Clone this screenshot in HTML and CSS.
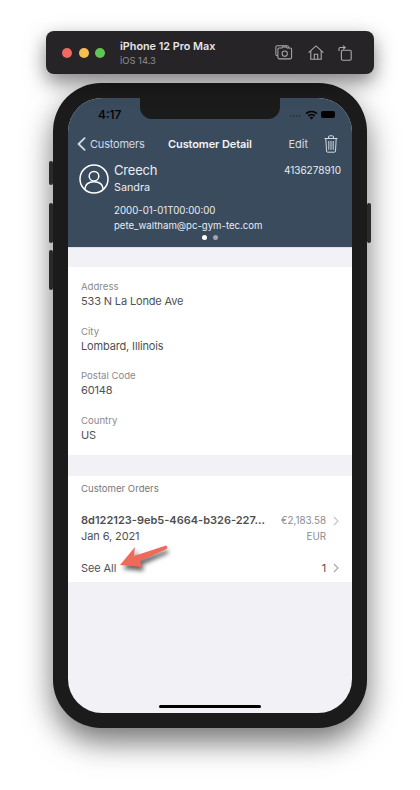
FILE: index.html
```html
<!DOCTYPE html>
<html lang="en">

<head>
  <meta charset="UTF-8">
  <meta name="viewport" content="width=device-width, initial-scale=1.0">
  <title>Customer Detail</title>
  <link rel="stylesheet" href="styles.css">
</head>

<body>

  <!-- Simulator title bar -->
  <div class="sim-bar">
    <div class="lights">
      <span class="light red"></span>
      <span class="light yellow"></span>
      <span class="light green"></span>
    </div>
    <div class="sim-title">
      <div class="sim-name">iPhone 12 Pro Max</div>
      <div class="sim-os">iOS 14.3</div>
    </div>
    <div class="sim-tools">
      <svg width="18" height="15" viewBox="0 0 19 16" fill="none" stroke="#a9a8aa" stroke-width="1.1">
        <path d="M3 11.5H2.2A1.4 1.4 0 0 1 .8 10.100V2.200A1.400 1.400 0 0 1 2.200.8h10.600a1.400 1.400 0 0 1 1.400 1.400V3"/>
        <path d="M4.400 3.500h2.900l1-1.300h3.400l1 1.300h3.500a1.400 1.400 0 0 1 1.400 1.400v8.700a1.400 1.400 0 0 1-1.400 1.400H4.400A1.400 1.400 0 0 1 3 13.600V4.900a1.400 1.400 0 0 1 1.400-1.400z" transform="translate(0 -.2)"/>
        <circle cx="10.300" cy="9.200" r="2.800"/>
      </svg>
      <svg width="16" height="15" viewBox="0 0 16 15" fill="none" stroke="#a9a8aa" stroke-width="1.1">
        <path d="M.6 7.600 8 .9l7.400 6.700"/>
        <path d="M2.800 6v8.300h10.400V6"/>
        <path d="M6.300 14.300V9.300h3.400v5"/>
      </svg>
      <svg width="14" height="16" viewBox="0 0 14 16" fill="none" stroke="#a9a8aa" stroke-width="1.1">
        <rect x="3.400" y="5.200" width="9.800" height="10" rx="1.200"/>
        <path d="M1 6V3.800a1.300 1.300 0 0 1 1.300-1.300H7"/>
        <path d="M5 .6 7.200 2.500 5 4.400"/>
      </svg>
    </div>
  </div>

  <div class="phone">
    <span class="side-btn mute"></span>
    <span class="side-btn vol-up"></span>
    <span class="side-btn vol-down"></span>
    <span class="side-btn power"></span>

    <div class="screen">
      <div class="notch"></div>

      <header class="head">
        <div class="status">
          <span class="clock">4:17</span>
          <div class="status-icons">
            <span class="signal"><i></i><i></i><i></i><i></i></span>
            <svg width="13" height="10" viewBox="0 0 13 10" fill="#000">
              <path d="M6.500 9.600 4.600 7.400a2.800 2.800 0 0 1 3.800 0z"/>
              <path d="M3.700 6.400 2.600 5.200a5.800 5.800 0 0 1 7.800 0L9.300 6.400a4.200 4.200 0 0 0-5.600 0z"/>
              <path d="M1.700 4.200.5 3a8.800 8.800 0 0 1 12 0l-1.200 1.200a7.100 7.100 0 0 0-9.600 0z"/>
            </svg>
            <span class="battery"></span>
          </div>
        </div>

        <nav class="nav">
          <div class="nav-back">
            <svg width="9" height="14" viewBox="0 0 9 14" fill="none" stroke="#d3dae3" stroke-width="1.800" stroke-linecap="round" stroke-linejoin="round">
              <path d="M7.600 1.200 1.600 7l6 5.800"/>
            </svg>
            <span>Customers</span>
          </div>
          <div class="nav-title">Customer Detail</div>
          <div class="nav-actions">
            <span>Edit</span>
            <svg width="14" height="18" viewBox="0 0 14 18" fill="none" stroke="#d3dae3" stroke-width="1">
              <path d="M.5 3.500h13"/>
              <path d="M4.500 3.300V2a1.200 1.200 0 0 1 1.200-1.200h2.600A1.200 1.200 0 0 1 9.500 2v1.300"/>
              <path d="M1.800 3.600l.7 12.400a1.200 1.200 0 0 0 1.200 1.200h6.600a1.200 1.200 0 0 0 1.200-1.200l.7-12.400"/>
              <path d="M4.800 6v8.800M7 6v8.800M9.200 6v8.800"/>
            </svg>
          </div>
        </nav>

        <div class="profile">
          <svg class="avatar" width="30" height="30" viewBox="0 0 30 30" fill="none" stroke="#fff" stroke-width="1.500">
            <circle cx="15" cy="15" r="14"/>
            <circle cx="15" cy="12.200" r="4.800"/>
            <path d="M5.800 25c.5-4.600 4-7.200 9.200-7.200s8.700 2.600 9.200 7.200"/>
          </svg>
          <div class="profile-info">
            <div class="profile-top">
              <div class="last-name">Creech</div>
              <div class="phone-no">4136278910</div>
            </div>
            <div class="first-name">Sandra</div>
            <div class="birth">2000-01-01T00:00:00</div>
            <div class="email">pete_waltham@pc-gym-tec.com</div>
          </div>
        </div>

        <div class="dots">
          <span class="dot on"></span>
          <span class="dot"></span>
        </div>
      </header>

      <section class="card address">
        <div class="field">
          <div class="label">Address</div>
          <div class="value">533 N La Londe Ave</div>
        </div>
        <div class="field">
          <div class="label">City</div>
          <div class="value">Lombard, Illinois</div>
        </div>
        <div class="field">
          <div class="label">Postal Code</div>
          <div class="value">60148</div>
        </div>
        <div class="field">
          <div class="label">Country</div>
          <div class="value">US</div>
        </div>
      </section>

      <section class="card orders">
        <div class="label">Customer Orders</div>
        <div class="order">
          <div class="order-main">
            <div class="order-id">8d122123-9eb5-4664-b326-227...</div>
            <div class="order-date">Jan 6, 2021</div>
          </div>
          <div class="order-price">
            <div class="price">€2,183.58</div>
            <div class="currency">EUR</div>
          </div>
          <svg class="chev order-chev" width="6" height="10" viewBox="0 0 6 10" fill="none" stroke="#c6c6c9" stroke-width="1.200">
            <path d="M1 1l4 4-4 4"/>
          </svg>
        </div>
        <div class="see-all">
          <span>See All</span>
          <div class="see-count">
            <span>1</span>
            <svg class="chev" width="6" height="10" viewBox="0 0 6 10" fill="none" stroke="#a9a9ad" stroke-width="1.200">
              <path d="M1 1l4 4-4 4"/>
            </svg>
          </div>
        </div>
      </section>

      <div class="home-bar"></div>
    </div>

    <!-- Annotation arrow on top of the screenshot -->
    <svg class="arrow" width="52" height="36" viewBox="0 0 52 36">
      <path class="arrow-shadow" d="M4 24 19 6l-1 9 30-10 2 3-27 12 2 6z"/>
      <path class="arrow-body" d="M1 20 16 2l-1 9L45.500 1a1.600 1.600 0 0 1 2 3L21 16l2 6z"/>
    </svg>
  </div>

</body>

</html>
```

FILE: styles.css
```css
:root {
  --header-blue: #3a4b5e;
  --page-gray: #f1f1f6;
  --bezel: #1b1b1b;
  --nav-text: #d3dae3;
  --label: #8a8a8e;
  --value: #505052;
}

* {
  margin: 0;
  padding: 0;
  box-sizing: border-box;
  font-family: 'Inter', 'Liberation Sans', sans-serif;
}

html,
body {
  height: 790px;
  overflow: hidden;
}

body {
  background-color: #fff;
  display: flex;
  flex-direction: column;
  align-items: flex-start;
  padding: 31px 0 0 46px;
}

/* Simulator bar */
.sim-bar {
  width: 328px;
  height: 43px;
  display: flex;
  align-items: center;
  padding: 0 22px 0 16px;
  background-color: #272428;
  border-radius: 8px;
  box-shadow: 0 8px 20px rgba(0, 0, 0, 0.5);
  position: relative;
  z-index: 2;
}

.lights {
  display: flex;
  gap: 6.500px;
}

.light {
  width: 10px;
  height: 10px;
  border-radius: 50%;
}

.red { background-color: #ef6a5f; }
.yellow { background-color: #f4bf4f; }
.green { background-color: #61c554; }

.sim-title {
  margin-left: 15px;
  flex: 1;
}

.sim-name {
  font-size: 10.800px;
  line-height: 13px;
  font-weight: 600;
  color: #e6e5e6;
}

.sim-os {
  font-size: 9.400px;
  line-height: 11px;
  color: #8f8d90;
  margin-top: 2px;
}

.sim-tools {
  display: flex;
  align-items: center;
  gap: 14.500px;
}

/* Phone */
.phone {
  position: relative;
  width: 314px;
  height: 645px;
  margin: 9px 0 0 7px;
  padding: 15px;
  background-color: var(--bezel);
  border-radius: 48px;
  box-shadow: 0 14px 30px rgba(0, 0, 0, 0.55);
}

.side-btn {
  position: absolute;
  width: 4px;
  background-color: #2a2a2a;
  border-radius: 2px;
}

.mute { left: -4px; top: 78px; height: 24px; }
.vol-up { left: -4px; top: 120px; height: 40px; }
.vol-down { left: -4px; top: 167px; height: 40px; }
.power { right: -4px; top: 120px; height: 40px; }

.screen {
  position: relative;
  width: 284px;
  height: 615px;
  background-color: var(--page-gray);
  border-radius: 34px;
  overflow: hidden;
  display: flex;
  flex-direction: column;
}

.notch {
  position: absolute;
  top: 0;
  left: 72px;
  width: 140px;
  height: 21px;
  background-color: var(--bezel);
  border-radius: 0 0 12px 12px;
}

/* Blue header */
.head {
  height: 150px;
  background-color: var(--header-blue);
  display: flex;
  flex-direction: column;
  border-bottom: 1px solid #dfe1e6;
}

.status {
  display: flex;
  justify-content: space-between;
  align-items: center;
  height: 21px;
  margin-top: 6px;
  padding: 0 17px 0 30px;
}

.clock {
  font-size: 12px;
  font-weight: 500;
  color: #000;
}

.status-icons {
  display: flex;
  align-items: center;
  gap: 3px;
}

.signal {
  display: flex;
  gap: 1px;
  margin-top: 3px;
  margin-right: 1px;
}

.signal i {
  width: 2px;
  height: 2px;
  background-color: #2f3a47;
}

.battery {
  width: 14px;
  height: 7px;
  background-color: #000;
  border-radius: 2px;
}

.nav {
  display: flex;
  align-items: center;
  height: 22px;
  margin-top: 8px;
  padding: 0 14px 0 9px;
  color: var(--nav-text);
  font-size: 11px;
}

.nav-back {
  display: flex;
  align-items: center;
  gap: 4px;
  width: 91px;
  letter-spacing: -0.200px;
}

.nav-title {
  flex: 1;
  font-weight: 600;
  letter-spacing: -0.100px;
  color: #f2f4f6;
}

.nav-actions {
  display: flex;
  align-items: center;
  gap: 16px;
}

.profile {
  display: flex;
  align-items: flex-start;
  gap: 5px;
  padding: 0 11px;
  margin-top: 9px;
  color: #e9edf1;
}

.avatar {
  flex-shrink: 0;
}

.profile-info {
  flex: 1;
  margin-top: -3px;
}

.profile-top {
  display: flex;
  justify-content: space-between;
  align-items: center;
}

.last-name {
  font-size: 13px;
  line-height: 18px;
  letter-spacing: -0.200px;
}

.phone-no {
  font-size: 10px;
}

.first-name {
  font-size: 10.800px;
  line-height: 14px;
  margin-top: 2px;
}

.birth {
  font-size: 9.700px;
  line-height: 14px;
  margin-top: 9px;
}

.email {
  font-size: 9.600px;
  line-height: 14px;
  margin-top: 1px;
}

.dots {
  display: flex;
  justify-content: center;
  gap: 6px;
  margin-top: 2px;
}

.dot {
  width: 5px;
  height: 5px;
  border-radius: 50%;
  background-color: #a2a5a9;
}

.dot.on {
  background-color: #fff;
}

/* White cards */
.card {
  background-color: #fff;
  padding: 0 13px;
  color: var(--value);
}

.address {
  margin-top: 19px;
  height: 188px;
  padding-top: 13px;
  display: flex;
  flex-direction: column;
  gap: 15.700px;
}

.label {
  font-size: 9.600px;
  line-height: 13px;
  color: var(--label);
}

.value {
  font-size: 11px;
  line-height: 15px;
  letter-spacing: -0.150px;
  margin-top: 1px;
}

.orders {
  margin-top: 21px;
  height: 106px;
  padding-top: 6px;
}

.orders .label {
  color: #77777b;
}

.order {
  display: flex;
  align-items: flex-start;
  margin-top: 18px;
}

.order-main {
  flex: 1;
}

.order-id {
  font-size: 11px;
  line-height: 15px;
  font-weight: 600;
}

.order-date {
  font-size: 11px;
  line-height: 15px;
  letter-spacing: -0.100px;
  margin-top: 1px;
}

.order-price {
  text-align: right;
  font-size: 9.800px;
  line-height: 15px;
  color: #8a8a8e;
}

.currency {
  margin-top: 1px;
}

.order-chev {
  margin: 3px 0 0 7px;
}

.see-all {
  display: flex;
  justify-content: space-between;
  align-items: center;
  font-size: 11px;
  letter-spacing: -0.100px;
  margin-top: 17px;
}

.see-count {
  display: flex;
  align-items: center;
  gap: 7px;
}

.home-bar {
  position: absolute;
  left: 91px;
  bottom: 5px;
  width: 102px;
  height: 3px;
  background-color: #000;
  border-radius: 2px;
}

/* Annotation */
.arrow {
  position: absolute;
  left: 66px;
  top: 462px;
  overflow: visible;
}

.arrow-body {
  fill: #ef6a5b;
}

.arrow-shadow {
  fill: rgba(0, 0, 0, 0.6);
  filter: blur(2px);
}
```
